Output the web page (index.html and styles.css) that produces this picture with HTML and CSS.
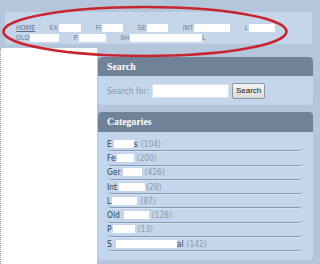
FILE: index.html
```html
<!DOCTYPE html>
<html>
<head>
<meta charset="utf-8">
<link rel="stylesheet" href="styles.css">
</head>
<body>
<div class="page">
  <nav class="nav">
    <div class="nav-row">
      <a class="nav-item home">HOME</a>
      <a class="nav-item">EX<i class="redact w22"></i></a>
      <a class="nav-item">FI<i class="redact w21"></i></a>
      <a class="nav-item">GE<i class="redact w21"></i></a>
      <a class="nav-item">INT<i class="redact w36"></i></a>
      <a class="nav-item">L<i class="redact w26"></i></a>
    </div>
    <div class="nav-row">
      <a class="nav-item">OLD<i class="redact w29"></i></a>
      <a class="nav-item">P<i class="redact w27"></i></a>
      <a class="nav-item">SH<i class="redact w72"></i>L</a>
    </div>
  </nav>
  <div class="main">
    <div class="content"></div>
    <aside class="sidebar">
      <section class="widget">
        <h2 class="widget-title">Search</h2>
        <form class="search-form">
          <label class="search-label">Search for:</label>
          <input class="search-input" type="text">
          <button class="search-button" type="button">Search</button>
        </form>
      </section>
      <section class="widget">
        <h2 class="widget-title cat-title">Categories</h2>
        <ul class="cat-list">
          <li class="cat"><a class="cat-name">E<i class="redact c20 sp1"></i>s</a><span class="count">(104)</span></li>
          <li class="cat"><a class="cat-name">Fe<i class="redact c17"></i></a><span class="count">(200)</span></li>
          <li class="cat"><a class="cat-name">Ger<i class="redact c19 sp1"></i></a><span class="count">(426)</span></li>
          <li class="cat"><a class="cat-name">Int<i class="redact c26 sp1"></i></a><span class="count tight">(28)</span></li>
          <li class="cat"><a class="cat-name">L<i class="redact c25"></i></a><span class="count">(87)</span></li>
          <li class="cat"><a class="cat-name">Old<i class="redact c25 sp3"></i></a><span class="count">(128)</span></li>
          <li class="cat"><a class="cat-name">P<i class="redact c22"></i></a><span class="count">(13)</span></li>
          <li class="cat"><a class="cat-name">S<i class="redact c61 sp3"></i>al</a><span class="count">(142)</span></li>
        </ul>
      </section>
    </aside>
  </div>
  <svg class="annotation" width="320" height="70" viewBox="0 0 320 70">
    <ellipse cx="145" cy="31.5" rx="141.5" ry="24.5" fill="none" stroke="#c8252e" stroke-width="2.6"/>
  </svg>
</div>
</body>
</html>
```

FILE: styles.css
```css
html, body {
  margin: 0;
  padding: 0;
}
body {
  width: 320px;
  height: 264px;
  overflow: hidden;
  background: #b5c6dc;
  font-family: "DejaVu Sans Condensed", "DejaVu Sans", sans-serif;
}
.page {
  position: relative;
  width: 320px;
  height: 264px;
  overflow: hidden;
}

/* nav */
.nav {
  margin: 12px 8px 0 5px;
  height: 32px;
  box-sizing: border-box;
  padding: 11px 0 0 11px;
  background: #c5d6ea;
  border-radius: 4px;
}
.nav-row {
  display: flex;
  align-items: center;
  height: 10px;
  gap: 14.5px;
}
.nav-item {
  display: flex;
  align-items: center;
  font-size: 7px;
  color: #6e7d90;
  text-transform: uppercase;
  line-height: 10px;
}
.home {
  text-decoration: underline;
  color: #5f6e82;
}
.redact {
  display: inline-block;
  height: 8px;
  background: #ffffff;
  margin-left: 1px;
}
.w21 { width: 21px; }
.w22 { width: 22px; }
.w26 { width: 26px; }
.w27 { width: 27px; }
.w29 { width: 29px; }
.w36 { width: 36px; }
.w72 { width: 72px; }

/* main */
.main {
  display: flex;
  margin-top: 4px;
  height: 216px;
}
.content {
  width: 97px;
  margin-right: 1px;
  background: #ffffff;
  border-left: 1px dotted #8e9aa8;
  box-sizing: border-box;
}
.sidebar {
  width: 215px;
  padding-top: 9px;
  display: flex;
  flex-direction: column;
  gap: 7px;
}
.widget {
  background: #c4d6eb;
  border-radius: 4px;
  overflow: hidden;
}
.widget-title {
  margin: 0;
  height: 19px;
  line-height: 19px;
  padding-left: 9px;
  background: #6f8298;
  color: #ffffff;
  font-family: "Liberation Serif", serif;
  font-weight: bold;
  font-size: 9.8px;
}
.cat-title {
  height: 20px;
  line-height: 20px;
}

/* search */
.search-form {
  display: flex;
  align-items: center;
  height: 29px;
  margin: 0;
  padding-left: 9px;
}
.search-label {
  font-size: 8.6px;
  color: #8797ac;
}
.search-input {
  width: 77px;
  height: 14px;
  box-sizing: border-box;
  margin: 0 0 0 3px;
  padding: 0;
  border: 1px solid #d9e2ec;
  background: #ffffff;
}
.search-button {
  margin: 0 0 0 3px;
  width: 33px;
  height: 16px;
  padding: 0;
  border: 1px solid #8d959f;
  border-radius: 2px;
  background: linear-gradient(#f6f6f6, #dadada);
  font-family: "Liberation Sans", sans-serif;
  font-size: 8px;
  color: #111111;
}

/* categories */
.cat-list {
  list-style: none;
  margin: 0;
  padding: 5px 10px 9px 9px;
}
.cat {
  display: flex;
  align-items: center;
  height: 13.3px;
  border-bottom: 1px solid #8699b0;
  border-radius: 0 0 8px 8px / 0 0 2px 2px;
  box-shadow: 0 1px 0 #d5e2f1;
  font-size: 8.4px;
}
.cat-name {
  display: flex;
  align-items: center;
  color: #343d4a;
}
.count {
  margin-left: 3px;
  color: #8b9bb1;
}
.count.tight {
  margin-left: 1px;
}
.c17 { width: 17px; }
.c19 { width: 19px; }
.c20 { width: 20px; }
.c22 { width: 22px; }
.c25 { width: 25px; }
.c26 { width: 26px; }
.c61 { width: 61px; }
.sp1 { margin-left: 2px; }
.sp3 { margin-left: 4px; }

/* annotation overlay */
.annotation {
  position: absolute;
  left: 0;
  top: 0;
  pointer-events: none;
}
```
